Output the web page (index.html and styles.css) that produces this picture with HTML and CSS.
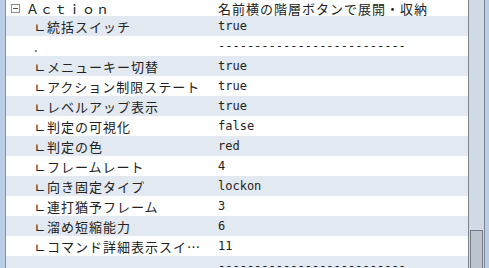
FILE: index.html
```html
<!DOCTYPE html>
<html lang="ja">
<head>
  <meta charset="UTF-8" />
  <title>Action</title>
  <link rel="stylesheet" href="styles.css">
</head>
<body>
  <div class="frame">
    <div class="edge"></div>

    <div class="list">
      <div class="row head">
        <div class="name"><span class="toggle"></span>Ａｃｔｉｏｎ</div>
        <div class="value jp">名前横の階層ボタンで展開・収納</div>
      </div>
      <div class="row">
        <div class="name child">ㄴ統括スイッチ</div>
        <div class="value">true</div>
      </div>
      <div class="row">
        <div class="name child">.</div>
        <div class="value">--------------------------</div>
      </div>
      <div class="row">
        <div class="name child">ㄴメニューキー切替</div>
        <div class="value">true</div>
      </div>
      <div class="row">
        <div class="name child">ㄴアクション制限ステート</div>
        <div class="value">true</div>
      </div>
      <div class="row">
        <div class="name child">ㄴレベルアップ表示</div>
        <div class="value">true</div>
      </div>
      <div class="row">
        <div class="name child">ㄴ判定の可視化</div>
        <div class="value">false</div>
      </div>
      <div class="row">
        <div class="name child">ㄴ判定の色</div>
        <div class="value">red</div>
      </div>
      <div class="row">
        <div class="name child">ㄴフレームレート</div>
        <div class="value">4</div>
      </div>
      <div class="row">
        <div class="name child">ㄴ向き固定タイプ</div>
        <div class="value">lockon</div>
      </div>
      <div class="row">
        <div class="name child">ㄴ連打猶予フレーム</div>
        <div class="value">3</div>
      </div>
      <div class="row">
        <div class="name child">ㄴ溜め短縮能力</div>
        <div class="value">6</div>
      </div>
      <div class="row">
        <div class="name child">ㄴコマンド詳細表示スイ…</div>
        <div class="value">11</div>
      </div>
      <div class="row">
        <div class="name child">.</div>
        <div class="value">--------------------------</div>
      </div>
    </div>

    <div class="scrollbar">
      <div class="thumb"></div>
    </div>
    <div class="edge right"></div>
  </div>
</body>
</html>
```

FILE: styles.css
```css
html, body {
  margin: 0;
  padding: 0;
  height: 100%;
  overflow: hidden;
  background: #ffffff;
}

.frame {
  display: flex;
  height: 268px;
  overflow: hidden;
}

.edge {
  width: 5px;
  background: #b9cde5;
  border-right: 1px solid #8a9098;
  flex-shrink: 0;
}

.edge.right {
  width: 4px;
  border-right: none;
}

.list {
  flex: 1;
  overflow: hidden;
}

.row {
  display: flex;
  height: 20px;
  line-height: 21px;
  color: #222222;
}

.row:nth-child(even) {
  background: #e3e9f0;
}

.row.head {
  height: 16px;
  line-height: 17px;
}

.name {
  width: 211px;
  box-sizing: border-box;
  padding: 0 2px 0 28px;
  flex-shrink: 0;
  font-family: "Noto Sans CJK JP", sans-serif;
  font-size: 13px;
  letter-spacing: 1px;
  white-space: nowrap;
  overflow: hidden;
}

.head .name {
  display: flex;
  align-items: center;
  padding-left: 5px;
}

.toggle {
  width: 7px;
  height: 7px;
  border: 1px solid #8c8c8c;
  margin-right: 6px;
  position: relative;
  flex-shrink: 0;
}

.toggle::after {
  content: "";
  position: absolute;
  left: 1px;
  right: 1px;
  top: 3px;
  height: 1px;
  background: #555555;
}

.value {
  padding-left: 1px;
  font-family: "DejaVu Sans Mono", monospace;
  font-size: 12px;
  white-space: nowrap;
}

.value.jp {
  font-family: "Noto Sans CJK JP", sans-serif;
  font-size: 13px;
  letter-spacing: 1px;
}

.scrollbar {
  width: 17px;
  box-sizing: border-box;
  background: #cfdae6;
  border-left: 1px solid #7d848c;
  border-right: 1px solid #7d848c;
  padding: 230px 0 0 1px;
  flex-shrink: 0;
}

.thumb {
  width: 11px;
  height: 60px;
  background: #bcc6d0;
  border: 1px solid #737a83;
}
```
